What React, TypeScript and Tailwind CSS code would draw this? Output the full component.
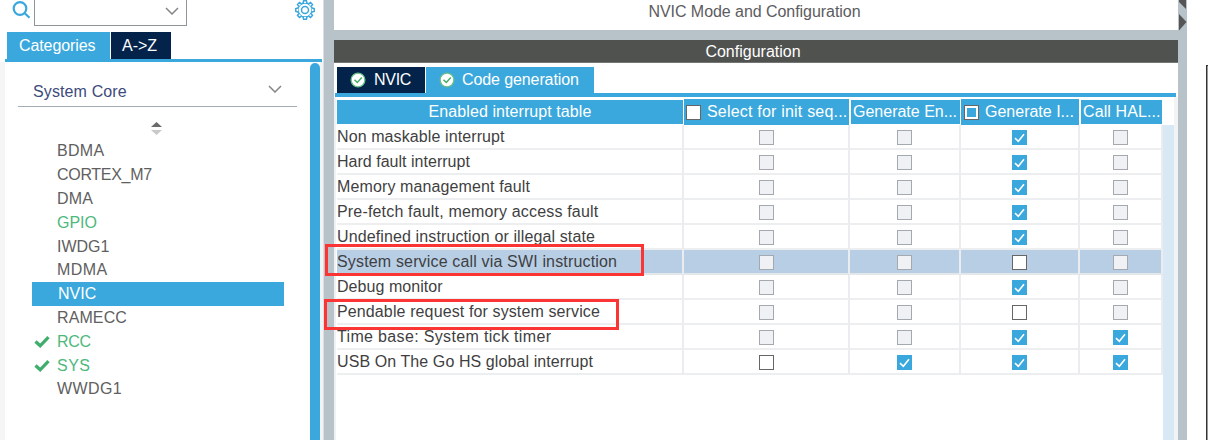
import type { ReactNode } from "react";

type CheckState = "off" | "open" | "on";

const peripherals: { name: string; tracking: string; state?: "used" | "selected"; tick?: boolean }[] = [
  { name: "BDMA", tracking: "tracking-[0.3px]" },
  { name: "CORTEX_M7", tracking: "tracking-[-0.3px]" },
  { name: "DMA", tracking: "tracking-[0.2px]" },
  { name: "GPIO", tracking: "tracking-normal", state: "used" },
  { name: "IWDG1", tracking: "tracking-normal" },
  { name: "MDMA", tracking: "tracking-[0.4px]" },
  { name: "NVIC", tracking: "tracking-normal", state: "selected" },
  { name: "RAMECC", tracking: "tracking-[0.1px]" },
  { name: "RCC", tracking: "tracking-[-0.3px]", state: "used", tick: true },
  { name: "SYS", tracking: "tracking-[0.5px]", state: "used", tick: true },
  { name: "WWDG1", tracking: "tracking-[0.4px]" },
];

const interrupts: { name: string; tracking: string; cells: CheckState[]; selected?: boolean }[] = [
  { name: "Non maskable interrupt", tracking: "tracking-[0.1px]", cells: ["off", "off", "on", "off"] },
  { name: "Hard fault interrupt", tracking: "tracking-[0.02px]", cells: ["off", "off", "on", "off"] },
  { name: "Memory management fault", tracking: "tracking-[0.12px]", cells: ["off", "off", "on", "off"] },
  { name: "Pre-fetch fault, memory access fault", tracking: "tracking-[0.17px]", cells: ["off", "off", "on", "off"] },
  { name: "Undefined instruction or illegal state", tracking: "tracking-[0.12px]", cells: ["off", "off", "on", "off"] },
  {
    name: "System service call via SWI instruction",
    tracking: "tracking-[0.16px]",
    cells: ["off", "off", "open", "off"],
    selected: true,
  },
  { name: "Debug monitor", tracking: "tracking-[0.05px]", cells: ["off", "off", "on", "off"] },
  { name: "Pendable request for system service", tracking: "tracking-[0.12px]", cells: ["off", "off", "open", "off"] },
  { name: "Time base: System tick timer", tracking: "tracking-[0.34px]", cells: ["off", "off", "on", "on"] },
  { name: "USB On The Go HS global interrupt", tracking: "tracking-[0.09px]", cells: ["open", "on", "on", "on"] },
];

const COLS = "grid grid-cols-[347px_166px_111px_119px_83px]";

function Check({ state }: { state: CheckState }) {
  if (state === "on") {
    return (
      <svg className="size-[15px] shrink-0" viewBox="0 0 15 15">
        <rect width="15" height="15" fill="#3aa8dc" />
        <path d="M3 8.2 6.300 11.300 12 4.300" fill="none" stroke="#fff" strokeWidth="1.6" />
      </svg>
    );
  }
  return state === "open" ? (
    <span className="size-[15px] shrink-0 border border-[#666] bg-white" />
  ) : (
    <span className="size-[15px] shrink-0 border border-[#a3a9af] bg-[#f0f1f4]" />
  );
}

function Chevron() {
  return (
    <svg className="h-2 w-[14px] shrink-0" viewBox="0 0 14 8">
      <path d="M1 1 7 7 13 1" fill="none" stroke="#858585" strokeWidth="1.5" />
    </svg>
  );
}

function StatusDot() {
  return (
    <svg className="size-4 shrink-0" viewBox="0 0 16 16">
      <circle cx="8" cy="8" r="6.9" fill="#fff" stroke="#67bd89" strokeWidth="1.3" />
      <path d="M4.5 7.800 7.300 10.500 11.800 5.600" fill="none" stroke="#43ad6b" strokeWidth="1.5" />
    </svg>
  );
}

function Gear() {
  const teeth = [0, 45, 90, 135, 180, 225, 270, 315];
  return (
    <svg className="size-5" viewBox="0 0 20 20" fill="none" stroke="#3aa8dc" strokeWidth="1.5">
      <circle cx="10" cy="10" r="7.100" />
      <circle cx="10" cy="10" r="3.500" />
      {teeth.map((a) => (
        <path key={a} d="M8.100 3.100 8.600 0.800h2.800l0.500 2.300" fill="#fff" transform={`rotate(${a} 10 10)`} />
      ))}
    </svg>
  );
}

function HeaderCell({ children, tall, inset }: { children: ReactNode; tall?: boolean; inset?: boolean }) {
  const shape = tall
    ? "mr-px flex h-[26px] items-center gap-[6px] bg-[#3aa8dc] pl-[2px]"
    : inset
      ? "mx-px mt-px flex h-6 items-center bg-[#3aa8dc] pl-[2px]"
      : "mt-px mr-px flex h-6 items-center bg-[#3aa8dc]";
  return <div className={shape}>{children}</div>;
}

function Sidebar() {
  return (
    <aside className="flex w-[323px] shrink-0 flex-col">
      <div className="flex h-8 items-start">
        <svg className="mt-px ml-3 size-[18px]" viewBox="0 0 18 18" fill="none" stroke="#3aa8dc" strokeWidth="2.200">
          <circle cx="8" cy="7.500" r="6.300" />
          <path d="m12.500 12 5 4.800" />
        </svg>
        <div className="ml-1 flex h-[26px] w-[153px] items-start justify-end border border-t-0 border-[#8e959b] pt-[7px] pr-[7px]">
          <Chevron />
        </div>
        <div className="ml-[108px]">
          <Gear />
        </div>
      </div>
      <div className="ml-[7px] flex h-[27px] gap-px text-white">
        <div className="w-[103px] bg-[#3aa8dc] pl-[12px] leading-[27px] tracking-[-0.1px]">Categories</div>
        <div className="w-[60px] bg-[#03234b] pl-[11px] leading-[27px]">A-&gt;Z</div>
      </div>
      <div className="mr-px ml-[5px] h-[3px] shrink-0 bg-[#3aa8dc]" />
      <div className="flex h-[378px]">
        <div className="w-[5px] bg-[#f5f5f6]" />
        <div className="flex w-[305px] flex-col">
          <div className="ml-[13px] flex h-[45px] w-[279px] items-end justify-between border-b border-[#a4adb6] pr-[15px] pb-[2px] pl-[15px] text-[#3c4b7c]">
            <span className="leading-[25px] tracking-[0.12px]">System Core</span>
            <span className="flex pb-[11px]">
              <Chevron />
            </span>
          </div>
          <svg className="mt-[15px] ml-[146px] h-[14px] w-[11px] shrink-0" viewBox="0 0 11 14">
            <path d="M0 5 5.500 0 11 5z" fill="#6a6a6a" />
            <path d="M0 8h11l-5.500 5z" fill="#c9c9c9" />
          </svg>
          <ul className="mt-[3px] ml-[27px] w-[252px]">
            {peripherals.map((p) => (
              <li
                key={p.name}
                className={
                  p.state === "selected"
                    ? "flex h-[23.8px] items-center bg-[#3aa8dc] pt-px pl-[26px] text-white"
                    : p.state === "used"
                      ? "flex h-[23.8px] items-center pt-px pl-[2px] text-[#4db97c]"
                      : "flex h-[23.8px] items-center pt-px pl-[25px] text-[#606060]"
                }
              >
                {p.state === "used" && (
                  <span className="flex w-[23px]">
                    {p.tick && (
                      <svg className="h-3 w-4" viewBox="0 0 16 12">
                        <path d="M1.500 5.500 6.200 9.800 14.500 1.200" fill="none" stroke="#3fae6b" strokeWidth="3.200" />
                      </svg>
                    )}
                  </span>
                )}
                <span className={p.tracking}>{p.name}</span>
              </li>
            ))}
          </ul>
        </div>
        <div className="mt-px w-[10px] rounded-t-[5px] bg-[#3aa8dc]" />
        <div className="w-[3px] bg-[#f2f3f5]" />
      </div>
    </aside>
  );
}

function Main() {
  return (
    <main className="flex w-[844px] shrink-0 flex-col">
      <div className="h-[30px] pr-[3px] text-center leading-[23px] tracking-[-0.05px] text-[#5c5c60]">
        NVIC Mode and Configuration
      </div>
      <div className="h-[10px] bg-[#b8c3c9]" />
      <h2 className="h-[23px] border-b border-[#747674] pr-[6px] text-center leading-6 text-white bg-[#505250]">
        Configuration
      </h2>
      <div className="mt-1 ml-[3px] flex h-[26px] gap-px text-white">
        <div className="flex w-[88px] items-center gap-2 bg-[#03234b] pl-[13px] tracking-[-0.3px]">
          <StatusDot />
          NVIC
        </div>
        <div className="flex w-[168px] items-center gap-[7px] bg-[#3aa8dc] pl-[13px] tracking-[-0.1px]">
          <StatusDot />
          Code generation
        </div>
      </div>
      <div className="ml-px h-1 w-[841px] bg-[#3aa8dc]" />
      <div className="flex h-[343px]">
        <div className="w-[2px] bg-[#f0f1f3]" />
        <div className="ml-px w-[826px]">
          <div className={`${COLS} mt-[2px] h-[26px] text-white`}>
            <HeaderCell>
              <span className="w-full text-center tracking-[0.08px]">Enabled interrupt table</span>
            </HeaderCell>
            <HeaderCell tall>
              <span className="size-[15px] shrink-0 border border-[#666] bg-white" />
              <span className="whitespace-nowrap tracking-[0.2px]">Select for init seq...</span>
            </HeaderCell>
            <HeaderCell inset>Generate En...</HeaderCell>
            <HeaderCell tall>
              <span className="ml-px flex size-[15px] shrink-0 items-center justify-center border border-[#666] bg-white">
                <span className="size-[9px] bg-[#3aa8dc]" />
              </span>
              <span className="whitespace-nowrap">Generate I...</span>
            </HeaderCell>
            <HeaderCell inset>
              <span className="tracking-[0.1px]">Call HAL...</span>
            </HeaderCell>
          </div>
          {interrupts.map((row) => (
            <div
              key={row.name}
              className={
                row.selected
                  ? `${COLS} h-[25px] border-b-2 border-[#e3e7ea] bg-[#b8cee5]`
                  : `${COLS} h-[25px] border-b-2 border-[#eceef0]`
              }
            >
              <div className="border-r-2 border-[#eaecef] leading-[24px] whitespace-nowrap text-[#3f3f42]">
                <span className={row.tracking}>{row.name}</span>
              </div>
              {row.cells.map((c, i) => (
                <div key={i} className="flex items-center justify-center border-r-2 border-[#eaecef]">
                  <Check state={c} />
                </div>
              ))}
            </div>
          ))}
        </div>
        <div className="mt-7 w-[11px] bg-[#d9e8f5]" />
        <div className="flex-1 bg-[#f2f3f5]" />
      </div>
    </main>
  );
}

export default function App() {
  return (
    <div className="relative flex h-[440px] w-[1208px] overflow-hidden bg-white font-['Liberation_Sans',Arial,sans-serif] text-[16px]">
      <Sidebar />
      <div className="w-[11px] shrink-0 border-l border-[#d9dfe2] bg-[#b8c3c9]" />
      <Main />
      <div className="w-[9px] shrink-0 bg-[#b8c3c9]">
        <svg className="h-[31px] w-[9px]" viewBox="0 0 9 31" fill="#555">
          <path d="M8 0v9L1 2V0z" />
          <path d="M1 14v16.500l7.500-8.500z" />
        </svg>
      </div>
      <div className="flex flex-1 justify-end pt-[65px]">
        <div className="w-[2px] border-t border-l border-[#333] bg-[#999]" />
      </div>
      <div className="absolute top-[244px] left-[325px] h-8 w-[319px] border-3 border-[#fb3434]" />
      <div className="absolute top-[299px] left-[324px] h-[31px] w-[295px] border-3 border-[#fb3434]" />
    </div>
  );
}
